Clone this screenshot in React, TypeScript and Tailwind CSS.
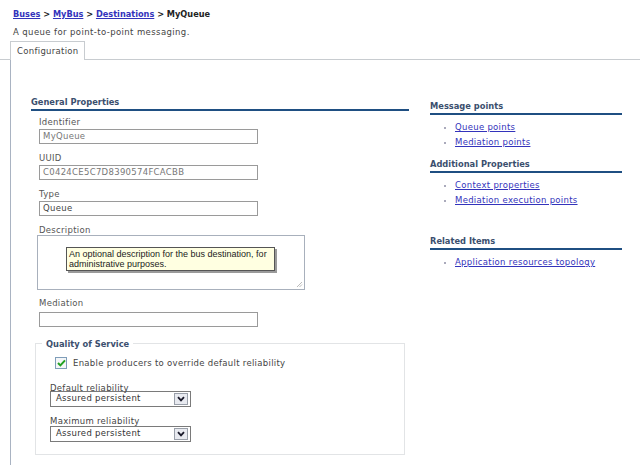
import { ReactNode } from "react";

const font = "font-['DejaVu_Sans',Verdana,sans-serif]";

function SectionHeading({ children }: { children: ReactNode }) {
  return (
    <div className="border-b-2 border-[#1f4f82] pb-[1px] text-[8.3px] font-bold leading-[12px] text-[#3b4f6e]">
      {children}
    </div>
  );
}

function Field({
  label,
  value,
  muted = false,
}: {
  label: string;
  value?: string;
  muted?: boolean;
}) {
  return (
    <div className="flex flex-col">
      <div className="h-[12px] text-[8.5px] leading-[12px] tracking-[0.3px] text-[#555]">{label}</div>
      <div
        className={`mt-[1px] flex h-[15px] w-[219px] items-center border border-[#9a9a9a] bg-white px-[3px] text-[8.5px] tracking-[0.3px] ${
          muted ? "text-[#777]" : "text-[#444]"
        }`}
      >
        {value}
      </div>
    </div>
  );
}

function LinkItem({ children }: { children: ReactNode }) {
  return (
    <li className="flex h-[15px] items-center">
      <span className="ml-[14px] mr-[9px] h-[2px] w-[2px] bg-[#aab]" />
      <a className="text-[8.5px] tracking-[0.3px] text-[#3333bb] underline decoration-[#3333bb]">{children}</a>
    </li>
  );
}

function SelectBox({ value, className = "" }: { value: string; className?: string }) {
  return (
    <div
      className={`ml-[14px] flex h-[16px] w-[141px] items-center justify-between border border-[#7a7a7a] bg-white pl-[5px] pr-[2px] text-[8.5px] tracking-[0.3px] text-[#333] ${className}`}
    >
      <span>{value}</span>
      <span className="flex h-[12px] w-[14px] items-center justify-center border border-[#9aa0aa] bg-[#e8eaf0]">
        <svg width="8" height="6" viewBox="0 0 8 6">
          <path d="M1 1.2 L4 4.4 L7 1.2" fill="none" stroke="#1a1a2a" strokeWidth="1.8" />
        </svg>
      </span>
    </div>
  );
}

export default function App() {
  return (
    <div className={`h-[465px] w-[640px] overflow-hidden bg-white ${font}`}>
      {/* Breadcrumb + description */}
      <div className="pl-[13px] pt-[8px]">
        <div className="h-[12px] text-[8.2px] font-bold leading-[12px] text-[#222]">
          <a className="text-[#3333bb] underline">Buses</a>
          <span> &gt; </span>
          <a className="text-[#3333bb] underline">MyBus</a>
          <span> &gt; </span>
          <a className="text-[#3333bb] underline">Destinations</a>
          <span> &gt; </span>
          <span>MyQueue</span>
        </div>
        <div className="mt-[6px] h-[12px] text-[8.5px] leading-[12px] tracking-[0.4px] text-[#444]">
          A queue for point-to-point messaging.
        </div>
      </div>

      {/* Tab strip */}
      <div className="mt-[3px] flex">
        <div className="w-[10px] border-b border-[#c8ccd0]" />
        <div className="flex h-[19px] w-[75px] items-center border border-b-0 border-[#c8ccd0] pl-[6px] text-[8.5px] tracking-[0.3px] text-[#444]">
          Configuration
        </div>
        <div className="flex-1 border-b border-[#c8ccd0]" />
      </div>

      {/* Tab body */}
      <div className="ml-[10px] flex h-[406px] border-l border-[#a9b3c2]">
        {/* Left column */}
        <div className="ml-[20px] mt-[36px] w-[378px]">
          <SectionHeading>General Properties</SectionHeading>
          <div className="ml-[8px] mt-[5px] flex flex-col gap-[8px]">
            <Field label="Identifier" value="MyQueue" muted />
            <Field label="UUID" value="C0424CE5C7D8390574FCACBB" muted />
            <Field label="Type" value="Queue" />
            <div className="flex flex-col">
              <div className="h-[11px] text-[8.5px] leading-[12px] tracking-[0.3px] text-[#555]">Description</div>
              <div className="relative -ml-[2px] h-[55px] w-[268px] border border-[#a8b0bc] bg-white">
                {/* tooltip */}
                <div className="absolute left-[28px] top-[11px] w-[209px] border border-[#555] bg-[#ffffe1] px-[2px] py-[1px] font-['Liberation_Sans',Arial,sans-serif] text-[9px] leading-[10px] text-[#222] shadow-[2px_2px_0_#9a9a9a]">
                  An optional description for the bus destination, for administrative purposes.
                </div>
                {/* resize grip */}
                <svg className="absolute bottom-[1px] right-[1px]" width="7" height="7" viewBox="0 0 7 7">
                  <path d="M6 1 L1 6 M6 3.5 L3.5 6" stroke="#aaa" strokeWidth="0.8" />
                </svg>
              </div>
            </div>
            <div className="-mt-[1px] flex flex-col">
              <div className="h-[12px] text-[8.5px] leading-[12px] tracking-[0.3px] text-[#555]">Mediation</div>
              <div className="mt-[3px] h-[15px] w-[219px] border border-[#9a9a9a] bg-white" />
            </div>
          </div>

          {/* Quality of Service group */}
          <div className="relative ml-[4px] mt-[16px] w-[370px] border border-[#e2e4e6] pb-[12px]">
            <div className="absolute -top-[6px] left-[6px] bg-white px-[4px] text-[8.3px] font-bold leading-[12px] text-[#3b4f6e]">
              Quality of Service
            </div>
            <div className="ml-[19px] mt-[13px] flex items-center">
              <span className="flex h-[12px] w-[12px] items-center justify-center border border-[#7f9db9] bg-[#f4f6f8]">
                <svg width="9" height="8" viewBox="0 0 9 8">
                  <path d="M1 4 L3.4 6.4 L8 1.4" fill="none" stroke="#21a121" strokeWidth="2" />
                </svg>
              </span>
              <span className="ml-[6px] text-[8.5px] tracking-[0.3px] text-[#444]">
                Enable producers to override default reliability
              </span>
            </div>
            <div className="ml-[14px] mt-[13px] h-[11px] text-[8.5px] leading-[11px] tracking-[0.3px] text-[#444]">
              Default reliability
            </div>
            <SelectBox value="Assured persistent" className="-mt-[3px]" />
            <div className="ml-[14px] mt-[9px] h-[11px] text-[8.5px] leading-[11px] tracking-[0.3px] text-[#444]">
              Maximum reliability
            </div>
            <SelectBox value="Assured persistent" className="-mt-[1px]" />
          </div>
        </div>

        {/* Right column */}
        <div className="ml-[21px] mt-[40px] w-[192px]">
          <SectionHeading>Message points</SectionHeading>
          <ul className="mt-[5px]">
            <LinkItem>Queue points</LinkItem>
            <LinkItem>Mediation points</LinkItem>
          </ul>
          <div className="mt-[8px]">
            <SectionHeading>Additional Properties</SectionHeading>
          </div>
          <ul className="mt-[5px]">
            <LinkItem>Context properties</LinkItem>
            <LinkItem>Mediation execution points</LinkItem>
          </ul>
          <div className="mt-[27px]">
            <SectionHeading>Related Items</SectionHeading>
          </div>
          <ul className="mt-[5px]">
            <LinkItem>Application resources topology</LinkItem>
          </ul>
        </div>
      </div>
    </div>
  );
}
